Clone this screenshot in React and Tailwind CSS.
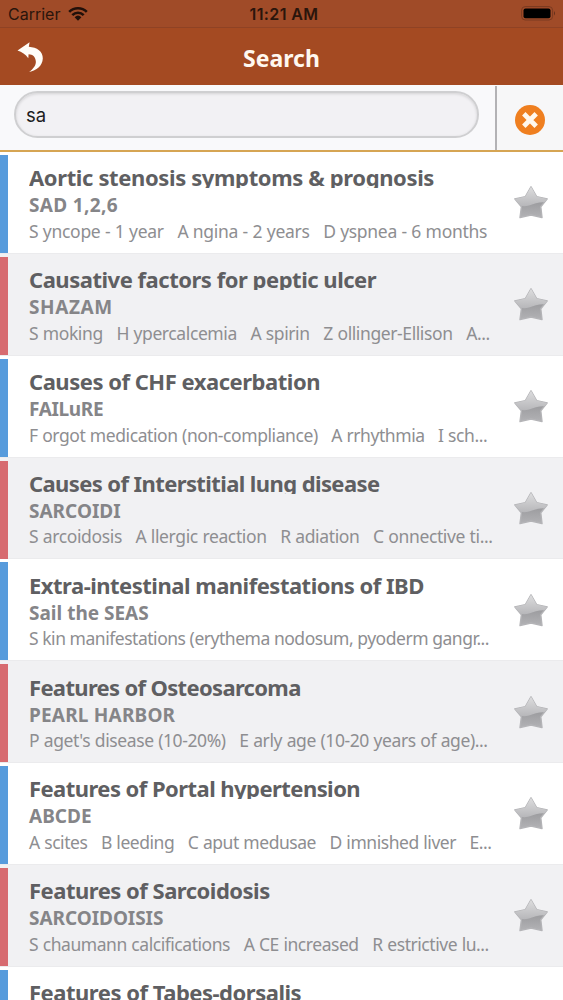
const items = [
  {
    title: "Aortic stenosis symptoms & prognosis",
    titleClass: "tracking-[-0.375px]",
    code: "SAD 1,2,6",
    codeClass: "tracking-[0.33px]",
    detail: "S yncope - 1 year   A ngina - 2 years   D yspnea - 6 months",
    detailClass: "tracking-[-0.3px] [word-spacing:0.3px]",
  },
  {
    title: "Causative factors for peptic ulcer",
    titleClass: "tracking-[-0.48px]",
    code: "SHAZAM",
    codeClass: "tracking-[0.6px]",
    detail: "S moking   H ypercalcemia   A spirin   Z ollinger-Ellison   A...",
    detailClass: "tracking-[-0.4px] [word-spacing:0.4px]",
  },
  {
    title: "Causes of CHF exacerbation",
    titleClass: "tracking-[-0.48px]",
    code: "FAILuRE",
    codeClass: "tracking-[-0.35px]",
    detail: "F orgot medication (non-compliance)   A rrhythmia   I sch...",
    detailClass: "tracking-[-0.42px] [word-spacing:0.35px]",
  },
  {
    title: "Causes of Interstitial lung disease",
    titleClass: "tracking-[-0.6px]",
    code: "SARCOIDI",
    codeClass: "tracking-normal",
    detail: "S arcoidosis   A llergic reaction   R adiation   C onnective ti...",
    detailClass: "tracking-[-0.37px] [word-spacing:0.35px]",
  },
  {
    title: "Extra-intestinal manifestations of IBD",
    titleClass: "tracking-[-0.5px]",
    code: "Sail the SEAS",
    codeClass: "tracking-normal",
    detail: "S kin manifestations (erythema nodosum, pyoderm gangr...",
    detailClass: "tracking-[-0.47px]",
  },
  {
    title: "Features of Osteosarcoma",
    titleClass: "tracking-[-0.67px]",
    code: "PEARL HARBOR",
    codeClass: "tracking-[0.2px]",
    detail: "P aget's disease (10-20%)   E arly age (10-20 years of age)...",
    detailClass: "tracking-[-0.4px] [word-spacing:0.4px]",
  },
  {
    title: "Features of Portal hypertension",
    titleClass: "tracking-[-0.55px]",
    code: "ABCDE",
    codeClass: "tracking-normal",
    detail: "A scites   B leeding   C aput medusae   D imnished liver   E...",
    detailClass: "tracking-[-0.45px] [word-spacing:0.4px]",
  },
  {
    title: "Features of Sarcoidosis",
    titleClass: "tracking-[-0.5px]",
    code: "SARCOIDOISIS",
    codeClass: "tracking-[-0.05px]",
    detail: "S chaumann calcifications   A CE increased   R estrictive lu...",
    detailClass: "tracking-[-0.45px] [word-spacing:0.45px]",
  },
  { title: "Features of Tabes-dorsalis", titleClass: "tracking-[-0.48px]", code: "", detail: "" },
];

const starPath =
  "M18 2.8 L23.6 12.6 L34.2 14.9 L27.8 22.8 L29 33.6 L18 31 L7 33.6 L8.4 22.8 L1.8 14.9 L12.4 12.6 Z";

function Star() {
  return (
    <svg width="36" height="36" viewBox="0 0 36 36" className="block">
      <defs>
        <linearGradient id="starBase" x1="0" y1="0" x2="0" y2="1">
          <stop offset="0.4" stopColor="#98989b" />
          <stop offset="1" stopColor="#b2b2b5" />
        </linearGradient>
        <linearGradient id="starShine" x1="0" y1="0" x2="0" y2="1">
          <stop offset="0.1" stopColor="#dededf" />
          <stop offset="1" stopColor="#b7b7ba" />
        </linearGradient>
        <clipPath id="starClip">
          <path d={starPath} />
        </clipPath>
      </defs>
      <path
        d={starPath}
        fill="url(#starBase)"
        stroke="#b4b4b7"
        strokeWidth="1.4"
        strokeLinejoin="round"
      />
      <path
        d="M0 0 H36 V17 C30 19 25 18 19 20.5 C14 22.5 11 22.5 6 21.5 L0 19 Z"
        fill="url(#starShine)"
        clipPath="url(#starClip)"
      />
    </svg>
  );
}

function StatusBar() {
  return (
    <div className="grid h-7 grid-cols-3 items-center border-b border-[#8f4224] bg-[#a04b28] px-2 text-[#2a150c]">
      <div className="flex items-center gap-[8px] font-['Inter','Liberation_Sans',sans-serif] text-[16px]">
        Carrier
        <svg width="20" height="14" viewBox="0 0 20 14">
          <g fill="none" stroke="#21100a" strokeWidth="2.6">
            <path d="M1.2 4.9 A12.6 12.6 0 0 1 18.8 4.9" />
            <path d="M4.3 8.1 A8.2 8.2 0 0 1 15.7 8.1" />
          </g>
          <path d="M6.6 10.2 A5 5 0 0 1 13.4 10.2 L10 13.8 Z" fill="#21100a" />
        </svg>
      </div>
      <div className="pl-[5px] text-center font-['Inter','Liberation_Sans',sans-serif] text-[16px] font-semibold tracking-[0.4px] whitespace-nowrap">
        11:21 AM
      </div>
      <svg width="36" height="15" viewBox="0 0 36 15" className="-mr-[2px] ml-auto">
        <rect x="0.6" y="0.6" width="31" height="13.4" rx="3.6" fill="none" stroke="#7a3a20" strokeWidth="1" />
        <rect x="2.5" y="2.5" width="27" height="9.8" rx="2" fill="#000" />
        <path d="M33 5 Q35 7.3 33 9.6 Z" fill="#64301c" />
      </svg>
    </div>
  );
}

function Header() {
  return (
    <div className="relative flex h-[57px] items-center justify-center bg-[#a44a22] pt-[3px]">
      <svg width="27" height="31" viewBox="0 0 27 31" className="absolute top-[14px] left-[17px]">
        <path
          d="M0.5 8.6 L12.6 0.3 L11.8 4.8 C20 5.4 26 9.5 25.8 16.5 C25.4 24 19.5 28.6 12.2 30 C16.5 26.5 19.3 23.3 18.8 19 C18.3 14.8 15.8 12.4 11.6 12.3 L11.3 16.2 C8.5 12.6 5 9.8 0.5 8.6 Z"
          fill="#fffdf8"
        />
      </svg>
      <h1 className="font-['Noto_Sans',sans-serif] text-[23px] leading-none font-bold text-[#fff8f0]">Search</h1>
    </div>
  );
}

function SearchBar() {
  return (
    <div className="flex h-[67px] border-b-2 border-[#d6a553] bg-[#f9f9fb]">
      <div className="flex-1 pt-[6px] pl-[14px]">
        <div className="flex h-[47px] w-[465px] items-center rounded-full border-2 border-[#cfcfd1] bg-[#f2f1f4] pt-[2px] pl-[10px] font-['Inter','Liberation_Sans',sans-serif] text-[18.5px] text-[#1c1c1e] shadow-[inset_0_1px_3px_rgba(0,0,0,0.13)]">
          sa
        </div>
      </div>
      <div className="mt-px flex w-[68px] items-center justify-center border-l-2 border-[#b3b2b5] bg-[#f7f7f8]">
        <svg width="30" height="30" viewBox="0 0 30 30" className="mt-[3px]">
          <circle cx="15" cy="15" r="15" fill="#ef7f20" />
          <path d="M8.8 8.8 L21.2 21.2 M21.2 8.8 L8.8 21.2" stroke="#fff8ee" strokeWidth="4.8" />
        </svg>
      </div>
    </div>
  );
}

function Row({ item, odd }) {
  return (
    <li
      className={`flex h-[101.85px] shrink-0 border-b border-[#ebebed] ${
        odd ? "bg-[#f1f1f3]" : "bg-white"
      }`}
    >
      <div
        className={`mt-[3px] h-[98px] w-2 shrink-0 ${odd ? "bg-[#d76b70]" : "bg-[#579bdc]"}`}
      />
      <div className="w-[490px] shrink-0 pt-[10.4px] pl-[21px] font-['Noto_Sans',sans-serif] whitespace-pre">
        {/* the title box is shorter than its line, so descenders get cut */}
        <div
          className={`h-[26px] overflow-hidden text-[22px] leading-[30px] font-bold text-[#5f5f62] ${item.titleClass}`}
        >
          {item.title}
        </div>
        <div
          className={`mt-[4px] h-[27px] text-[19px] leading-[27px] font-bold text-[#858588] ${item.codeClass}`}
        >
          {item.code}
        </div>
        <div className={`-mt-[0.5px] h-[25px] text-[17.5px] leading-[25px] text-[#8e8e91] ${item.detailClass}`}>
          {item.detail}
        </div>
      </div>
      <div className="pt-[32.4px] pl-[15px]">
        <Star />
      </div>
    </li>
  );
}

export default function App() {
  return (
    <div className="h-[1000px] w-[563px] overflow-hidden bg-white">
      <StatusBar />
      <Header />
      <SearchBar />
      <ul>
        {items.map((item, i) => (
          <Row key={item.title} item={item} odd={i % 2 === 1} />
        ))}
      </ul>
    </div>
  );
}
